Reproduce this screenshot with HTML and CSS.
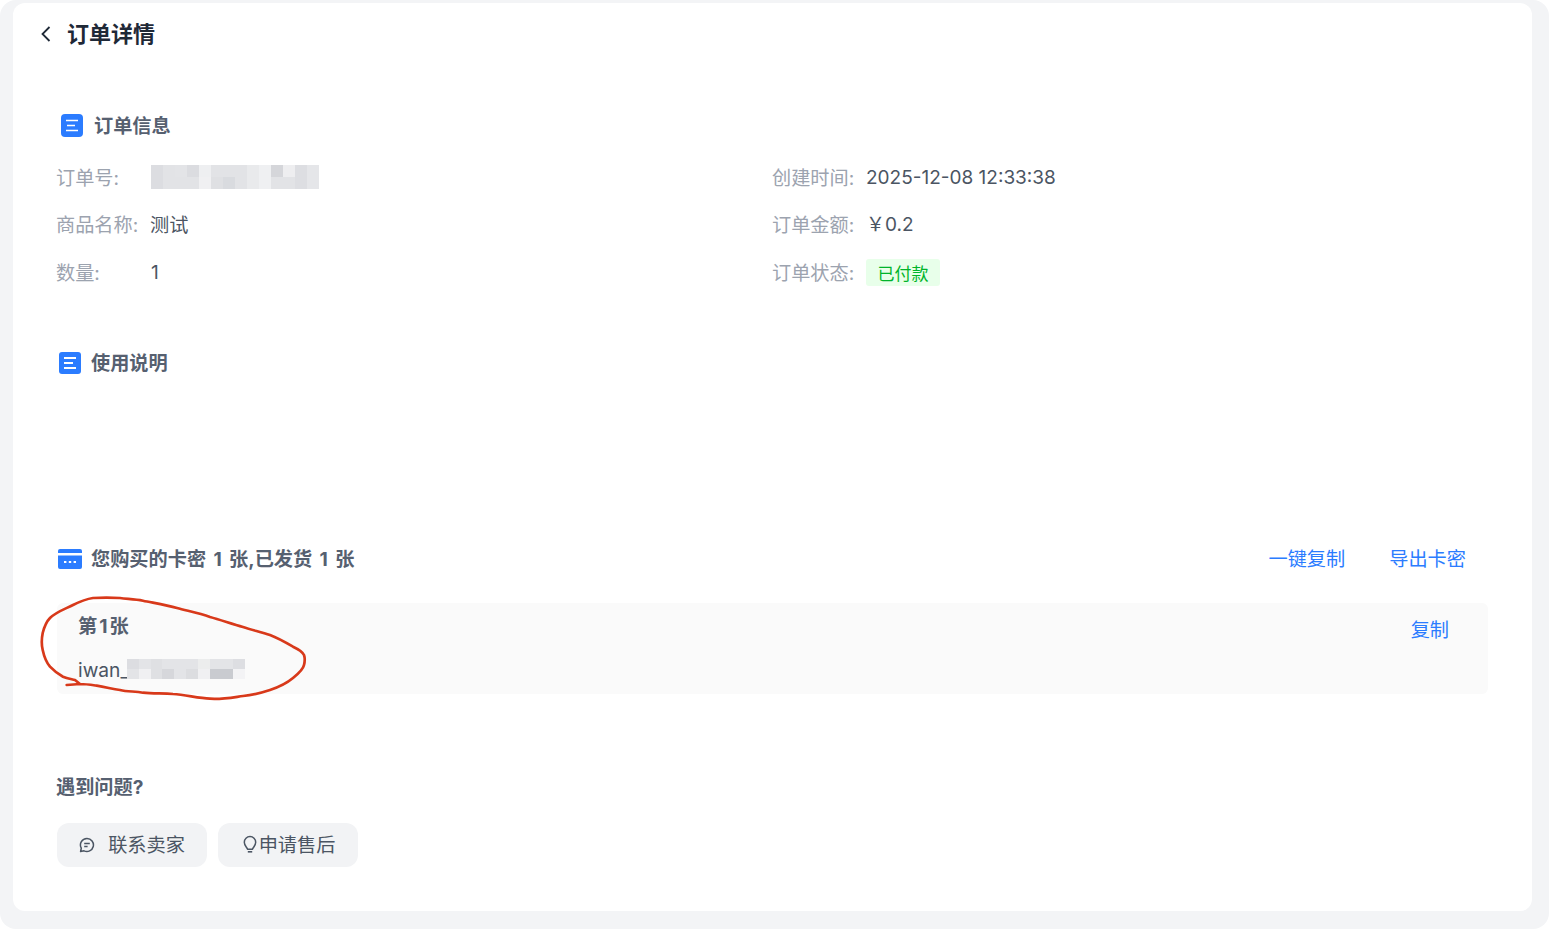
FILE: index.html
```html
<!DOCTYPE html>
<html lang="zh-CN">
<head>
<meta charset="utf-8">
<title>订单详情</title>
<link rel="stylesheet" href="styles.css">
</head>
<body>
<div class="page">
  <main class="panel">
    <header class="topbar">
      <svg class="back" viewBox="0 0 12 18" width="12" height="18"><path d="M9.5 2 L2.5 9 L9.5 16" fill="none" stroke="#1f2937" stroke-width="1.8"/></svg>
      <h1 class="page-title">订单详情</h1>
    </header>

    <section class="section-info">
      <h2 class="sec-head indent-4">
        <svg class="sec-icon" viewBox="0 0 22 23" width="22" height="23"><rect width="22" height="23" rx="4" fill="#2b7cff"/><path d="M5 6.5h12M6 11.5h8M5 16.5h12" stroke="#fff" stroke-width="1.6"/></svg>
        <span>订单信息</span>
      </h2>
      <div class="info-grid">
        <div class="info-row"><span class="label">订单号:</span>
          <svg class="mosaic" viewBox="0 0 14 2" width="168" height="24" shape-rendering="crispEdges">
            <rect width="14" height="2" fill="#e2e3e6"/>
            <rect x="0" y="0" width="1" height="2" fill="#dcdde1"/><rect x="2" y="0" width="1" height="1" fill="#e3e4e7"/><rect x="3" y="0" width="1" height="1" fill="#dbdce0"/><rect x="4" y="0" width="1" height="1" fill="#eeeff1"/><rect x="4" y="1" width="1" height="1" fill="#f0f0f2"/><rect x="5" y="1" width="1" height="1" fill="#dfe0e3"/><rect x="6" y="1" width="1" height="1" fill="#d9dbdf"/><rect x="8" y="0" width="1" height="2" fill="#e9eaec"/><rect x="9" y="0" width="1" height="2" fill="#eff0f2"/><rect x="10" y="0" width="1" height="1" fill="#d5d6da"/><rect x="11" y="0" width="1" height="1" fill="#eeeef0"/><rect x="12" y="0" width="1" height="2" fill="#dddee2"/><rect x="13" y="0" width="1" height="2" fill="#e5e6e9"/>
          </svg>
        </div>
        <div class="info-row"><span class="label">创建时间:</span><span class="value num date">2025-12-08 12:33:38</span></div>
        <div class="info-row"><span class="label">商品名称:</span><span class="value">测试</span></div>
        <div class="info-row"><span class="label">订单金额:</span><span class="value num price">￥0.2</span></div>
        <div class="info-row"><span class="label">数量:</span><span class="value qty">1</span></div>
        <div class="info-row"><span class="label">订单状态:</span><span class="badge">已付款</span></div>
      </div>
    </section>

    <section class="section-usage">
      <h2 class="sec-head indent-3">
        <svg class="sec-icon" viewBox="0 0 22 22" width="22" height="22"><rect width="22" height="22" rx="3" fill="#2b7cff"/><path d="M5 6h12M5 11h9M5 16h12" stroke="#fff" stroke-width="2"/></svg>
        <span class="lift">使用说明</span>
      </h2>
    </section>

    <section class="section-cards">
      <div class="cards-head">
        <h2 class="sec-head indent-2">
          <svg class="sec-icon" viewBox="0 0 24 20" width="24" height="20"><rect width="24" height="20" rx="2" fill="#2b7cff"/><rect y="4" width="24" height="2.500" fill="#fff"/><path d="M6 13h2.400M10.800 13h2.400M15.600 13h2.400" stroke="#fff" stroke-width="2"/></svg>
          <span class="lift spaced">您购买的卡密 1 张,已发货 1 张</span>
        </h2>
        <div class="head-actions">
          <a class="link">一键复制</a>
          <a class="link">导出卡密</a>
        </div>
      </div>
      <div class="card-item">
        <div class="card-text">
          <div class="card-no">第1张</div>
          <div class="card-code"><span>iwan_</span>
            <svg class="mosaic-sm" viewBox="0 0 10 2" width="118" height="20" preserveAspectRatio="none" shape-rendering="crispEdges">
              <rect width="10" height="2" fill="#e3e4e7"/>
              <rect x="0" y="0" width="1" height="1" fill="#dcdde1"/><rect x="1" y="1" width="1" height="1" fill="#f0f0f2"/><rect x="2" y="0" width="1" height="2" fill="#dfe0e3"/><rect x="3" y="1" width="1" height="1" fill="#d6d7db"/><rect x="5" y="1" width="1" height="1" fill="#dcdde0"/><rect x="6" y="0" width="1" height="1" fill="#eceded"/><rect x="6" y="1" width="1" height="1" fill="#f0f0f2"/><rect x="7" y="1" width="1" height="1" fill="#c9cbd0"/><rect x="8" y="1" width="1" height="1" fill="#c9cbd0"/><rect x="9" y="0" width="1" height="1" fill="#dddee2"/><rect x="9" y="1" width="1" height="1" fill="#f3f3f5"/>
            </svg>
          </div>
        </div>
        <a class="link">复制</a>
      </div>
    </section>

    <section class="section-help">
      <h2 class="sec-head help-title">遇到问题?</h2>
      <div class="help-actions">
        <button class="help-btn wide">
          <svg viewBox="0 0 16 16" width="16" height="16"><path d="M8 1.500a6.500 6.500 0 1 1-3 12.300L1.600 14.500l.7-3.300A6.500 6.500 0 0 1 8 1.500z" fill="none" stroke="#4b5563" stroke-width="1.500" stroke-linejoin="round"/><path d="M5.200 6.500h5.600M5.200 9.500h3.400" stroke="#4b5563" stroke-width="1.400"/></svg>
          <span class="lift">联系卖家</span>
        </button>
        <button class="help-btn shifted">
          <svg viewBox="0 0 14 20" width="14" height="20"><path d="M4.500 14.200C4.300 12.500 1.300 11 1.300 7.300a5.700 5.700 0 0 1 11.400 0c0 3.700-3 5.200-3.200 6.900z" fill="none" stroke="#4b5563" stroke-width="1.500" stroke-linejoin="round"/><path d="M4.800 16.800h4.400" stroke="#4b5563" stroke-width="1.600"/></svg>
          <span class="lift">申请售后</span>
        </button>
      </div>
    </section>
  </main>
</div>
<svg class="scribble" viewBox="0 0 1549 929" width="1549" height="929">
  <path d="M66.700 685 L80 684 C86 684 92 685 96.700 685.700 C106 687 112 689 120 690 C128 692 135 691 143 692.700 C153 694 163 693 173 694 C186 695 198 698 210 698.700 C222 699.500 232 697.500 243 696 C253 695 261 693 270 690 C279 687 287 683 293 678 C298 674 303 670 304 665 C305 661 305 658 304 655 C302 651 298 649 293 646.700 C285 642 278 638 270 635 C261 632 252 630 243 627 C232 624 221 620 210 617 C199 613 188 611 177 608 C166 605 154 603 143 600.700 C135 599 128 599 120 598 C111 597.500 102 597.500 93 598 C86 599 79 602 73 605 C65 609 56 612 50 618 C46 622 44 628 42.700 633 C41.500 639 41.500 645 42.700 650 C44 656 46 662 50 666.700 C54 671 58 674 63 676.700 C67 678.500 71 679 75 680 L80 684 L66.700 685" fill="none" stroke="#d8391a" stroke-width="2.700" stroke-linejoin="round" stroke-linecap="round"/>
</svg>
</body>
</html>
```
FILE: styles.css
```css
* { box-sizing: border-box; }
html, body { margin: 0; padding: 0; background: #fff; }
body {
  position: relative;
  width: 1549px;
  height: 929px;
  overflow: hidden;
  font-family: Inter, "Noto Sans CJK SC", sans-serif;
  font-size: 19.2px;
  color: #4b5563;
}
.page {
  height: 929px;
  padding: 3px 17px 18px 13px;
  background: #f3f4f6;
  border-radius: 16px;
}
.panel {
  height: 908px;
  padding: 0 44px 0 43px;
  background: #fff;
  border-radius: 12px;
}
.topbar {
  display: flex;
  align-items: center;
  height: 62px;
  margin-left: -16px;
  gap: 15px;
}
.back { flex: none; }
.page-title {
  margin: 0;
  padding-bottom: 4px;
  font-size: 22px;
  font-weight: 700;
  color: #1f2937;
}
.section-info { margin-top: 40px; }
.sec-head {
  display: flex;
  align-items: center;
  gap: 10px;
  height: 40px;
  margin: 0;
  font-size: 19.2px;
  font-weight: 700;
  color: #566070;
}
.indent-4 { padding-left: 5px; gap: 11px; }
.indent-3 { padding-left: 3px; }
.indent-2 { padding-left: 2px; gap: 9px; }
.lift { margin-bottom: 2px; }
.spaced { word-spacing: 2.8px; }
.help-title { padding-bottom: 2px; }
.info-grid {
  display: grid;
  grid-template-columns: 716px 1fr;
  grid-template-rows: 47px 48px 47.5px;
  margin-top: 8px;
}
.info-row { display: flex; align-items: center; }
.label {
  flex: none;
  width: 94px;
  color: #9ca3af;
}
.value { color: #4b5563; }
.num { font-size: 19px; }
.date { margin-top: 2px; }
.price { margin-bottom: 3px; }
.qty { margin-left: 1px; }
.mosaic { display: block; margin-left: 1px; }
.badge {
  display: flex;
  align-items: center;
  height: 27px;
  margin-top: 2px;
  padding: 0 11.5px;
  font-size: 17px;
  color: #00b42a;
  background: #e8ffea;
  border-radius: 3px;
}
.section-usage { margin-top: 47.5px; }
.section-cards { margin-top: 156px; }
.cards-head {
  display: flex;
  align-items: center;
  justify-content: space-between;
  padding-right: 22px;
}
.head-actions { display: flex; gap: 44px; margin-bottom: 2px; }
.link { color: #2b7cff; }
.card-item {
  display: flex;
  justify-content: space-between;
  height: 91px;
  margin: 24px 0 0 1px;
  padding: 12px 39px 0 21px;
  background: #fafafa;
  border-radius: 6px;
}
.card-no {
  height: 22px;
  line-height: 22px;
  font-weight: 700;
  letter-spacing: 2px;
  color: #566070;
}
.card-code {
  display: flex;
  align-items: center;
  height: 24px;
  margin-top: 21px;
  line-height: 24px;
}
.mosaic-sm { display: block; flex: none; margin: 0 0 2px -2px; }
.section-help { margin-top: 73px; }
.help-actions { display: flex; gap: 11px; margin: 16px 0 0 1px; }
.help-btn {
  display: flex;
  align-items: center;
  justify-content: center;
  gap: 2px;
  width: 140px;
  height: 44px;
  padding: 0;
  font: inherit;
  color: #4b5563;
  background: #f2f3f5;
  border: 0;
  border-radius: 12px;
}
.help-btn.wide { width: 150px; gap: 13px; }
.help-btn.shifted { padding-left: 2px; }
.scribble {
  position: absolute;
  left: 0;
  top: 0;
  pointer-events: none;
}
```
